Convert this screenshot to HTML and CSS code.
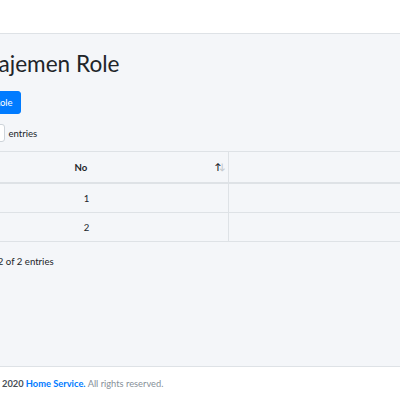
FILE: index.html
```html
<!DOCTYPE html>
<html>
<head>
<meta charset="utf-8">
<link rel="stylesheet" href="styles.css">
</head>
<body>
<div class="wrapper">
  <nav class="navbar"></nav>
  <main class="content">
    <div class="inner">
      <h1 class="title">Manajemen Role</h1>
      <button class="btn">Tambah Role</button>
      <div class="length">Show <span class="select">10</span> entries</div>
      <table class="table">
        <thead>
          <tr><th class="c1 sorting">No<span class="sort"><span class="up">&#8593;</span><span class="down">&#8595;</span></span></th><th class="c2">Nama Role</th></tr>
        </thead>
        <tbody>
          <tr><td class="c1">1</td><td class="c2"></td></tr>
          <tr><td class="c1">2</td><td class="c2"></td></tr>
        </tbody>
      </table>
      <div class="info">Showing 1 to 2 of 2 entries</div>
    </div>
  </main>
  <footer class="footer">
    <div class="foot-inner"><strong>Copyright &copy; 2020 <a class="brand">Home Service.</a></strong> All rights reserved.</div>
  </footer>
</div>
</body>
</html>
```

FILE: styles.css
```css
html, body {
  margin: 0;
  padding: 0;
  overflow: hidden;
}
body {
  font-family: "Source Sans Pro", Lato, "Liberation Sans", sans-serif;
  color: #212529;
  font-size: 9.6px;
  background: #ffffff;
}
.wrapper {
  width: 400px;
  height: 400px;
  display: flex;
  flex-direction: column;
}
.navbar {
  height: 33px;
  background: #ffffff;
  border-bottom: 1px solid #dee2e6;
  flex: none;
}
.content {
  height: 332px;
  background: #f4f6f9;
  flex: none;
  overflow: hidden;
}
.inner {
  margin-left: -46px;
  width: 560px;
  padding-top: 16px;
}
.title {
  margin: 0;
  font-size: 22.6px;
  font-weight: 400;
  line-height: 1.2;
  color: #212529;
}
.btn {
  display: block;
  margin-top: 14px;
  margin-left: -3px;
  height: 23px;
  padding: 0 7px;
  border: 1px solid #007bff;
  background: #007bff;
  color: #ffffff;
  font-family: inherit;
  font-size: 9.6px;
  border-radius: 3px;
}
.length {
  margin-top: 10px;
  margin-left: -15px;
  height: 18px;
  display: flex;
  align-items: center;
  font-size: 9.6px;
}
.select {
  display: inline-block;
  width: 40px;
  height: 18px;
  box-sizing: border-box;
  border: 1px solid #ced4da;
  border-radius: 3px;
  background: #ffffff;
  margin: 0 3px;
  color: transparent;
}
.table {
  margin-top: 9px;
  border-collapse: collapse;
  table-layout: fixed;
  width: 560px;
  font-size: 9.6px;
}
.table th, .table td {
  border: 1px solid #dee2e6;
  text-align: center;
  padding: 0 10px;
}
.table th {
  height: 30px;
  font-weight: 700;
  position: relative;
  border-bottom: 2px solid #dee2e6;
  border-top: 1px solid #dee2e6;
}
.table td {
  height: 28px;
}
.table tr > :first-child {
  border-left: none;
}
.table th.c1 {
  width: 234px;
  padding-right: 30px;
}
.table td.c1 {
  padding-right: 19px;
}
.c2 {
  color: transparent;
}
.sort {
  position: absolute;
  right: 5px;
  top: 10px;
  font-size: 9px;
  line-height: 9px;
  letter-spacing: -2.5px;
  font-weight: 700;
}
.up { color: #212529; }
.down { color: #c4c9ce; }
.info {
  margin-top: 14px;
  margin-left: -14px;
  font-size: 9.6px;
}
.footer {
  flex: 1;
  background: #ffffff;
  border-top: 1px solid #dee2e6;
  display: flex;
  align-items: center;
  font-size: 9.3px;
  color: #869099;
}
.foot-inner {
  margin-left: -51px;
  white-space: nowrap;
}
.footer strong {
  color: #495057;
}
.brand {
  color: #007bff;
}
```
